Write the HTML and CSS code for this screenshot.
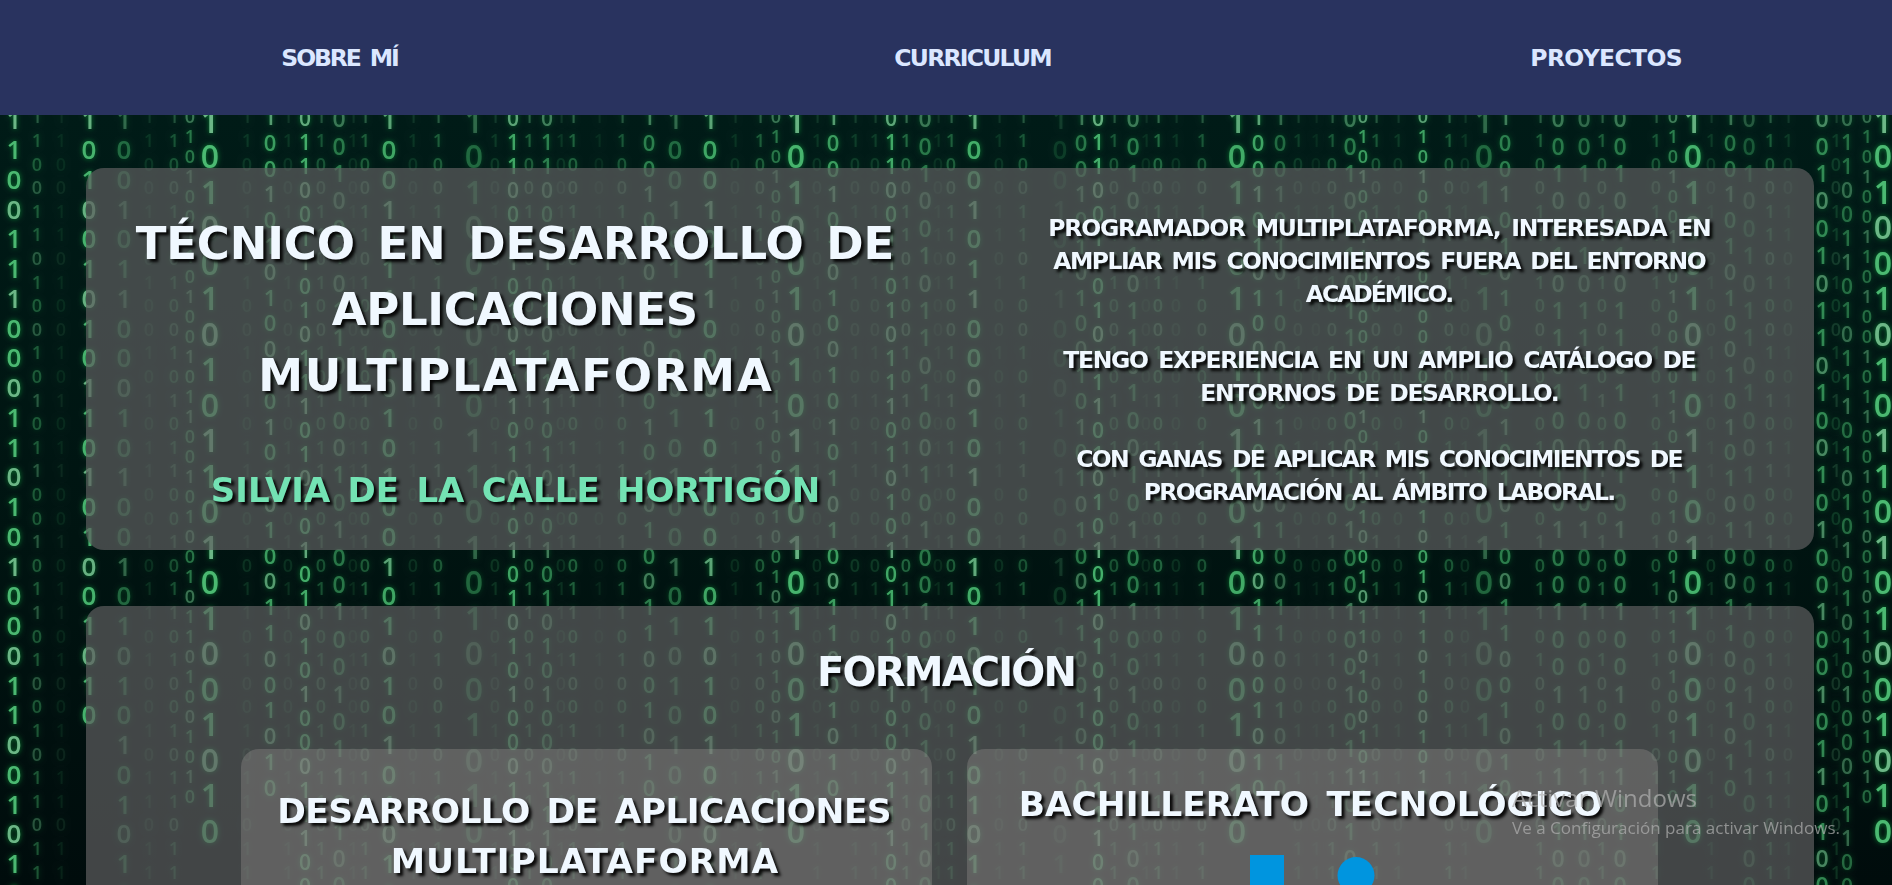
FILE: index.html
```html
<!DOCTYPE html>
<html lang="es">
<head>
<meta charset="utf-8">
<title>Portfolio</title>
<link rel="stylesheet" href="styles.css">
</head>
<body>
<canvas class="rain" id="rain" width="1892" height="885"></canvas>
<nav class="nav">
  <a class="nav-link"><span class="fit" data-width="116">SOBRE MÍ</span></a>
  <a class="nav-link"><span class="fit" data-width="156">CURRICULUM</span></a>
  <a class="nav-link"><span class="fit" data-width="150">PROYECTOS</span></a>
</nav>
<main class="main">
  <section class="card hero">
    <div class="intro">
      <h1 class="title">
        <span class="fit" data-width="754">TÉCNICO EN DESARROLLO DE</span>
        <span class="fit" data-width="362">APLICACIONES</span>
        <span class="fit" data-width="509">MULTIPLATAFORMA</span>
      </h1>
      <h2 class="name"><span class="fit" data-width="606">SILVIA DE LA CALLE HORTIGÓN</span></h2>
    </div>
    <div class="about">
      <p>
        <span class="fit" data-width="661">PROGRAMADOR MULTIPLATAFORMA, INTERESADA EN</span>
        <span class="fit" data-width="651">AMPLIAR MIS CONOCIMIENTOS FUERA DEL ENTORNO</span>
        <span class="fit" data-width="146">ACADÉMICO.</span>
      </p>
      <p>
        <span class="fit" data-width="631">TENGO EXPERIENCIA EN UN AMPLIO CATÁLOGO DE</span>
        <span class="fit" data-width="357">ENTORNOS DE DESARROLLO.</span>
      </p>
      <p>
        <span class="fit" data-width="605">CON GANAS DE APLICAR MIS CONOCIMIENTOS DE</span>
        <span class="fit" data-width="470">PROGRAMACIÓN AL ÁMBITO LABORAL.</span>
      </p>
    </div>
  </section>
  <section class="card training">
    <h2 class="section-title"><span class="fit" data-width="256">FORMACIÓN</span></h2>
    <div class="courses">
      <article class="course">
        <h3>
          <span class="fit" data-width="611">DESARROLLO DE APLICACIONES</span>
          <span class="fit" data-width="384">MULTIPLATAFORMA</span>
        </h3>
      </article>
      <article class="course course-second">
        <h3><span class="fit" data-width="580">BACHILLERATO TECNOLÓGICO</span></h3>
        <svg class="logo" width="126" height="60" viewBox="0 0 126 60">
          <rect x="0" y="0" width="34" height="60" fill="#0095df"/>
          <circle cx="106" cy="20.500" r="18.500" fill="#0095df"/>
        </svg>
      </article>
    </div>
  </section>
</main>
<aside class="watermark">
  <div class="watermark-title"><span class="fit" data-width="183">Activar Windows</span></div>
  <div class="watermark-text"><span class="fit" data-width="326">Ve a Configuración para activar Windows.</span></div>
</aside>
<script src="script.js"></script>
</body>
</html>
```
FILE: styles.css
```css
* { box-sizing: border-box; }
html, body { height: 100%; }
body {
  margin: 0;
  height: 885px;
  overflow: hidden;
  background: #001410;
  color: #f0f8ff;
  font-family: "DejaVu Sans", sans-serif;
  font-weight: 700;
}
.rain {
  position: fixed;
  inset: 0;
  z-index: -1;
  filter: blur(0.6px);
}
h1, h2, h3, p { margin: 0; font-weight: 700; }
.fit { display: inline-block; white-space: nowrap; }
.nav {
  height: 115px;
  padding-left: 24px;
  overflow: hidden;
  display: grid;
  grid-template-columns: repeat(3, 633px);
  justify-items: center;
  background: #29335f;
  color: #dbe7ff;
  font-size: 23.500px;
  line-height: 116px;
}
.main {
  height: 770px;
  padding: 53px 78px 0 86px;
  overflow: hidden;
  display: flex;
  flex-direction: column;
  gap: 56px;
}
.card {
  flex-shrink: 0;
  border-radius: 18px;
  background: rgba(94, 94, 96, 0.7);
  text-shadow: 3px 3px 3px rgba(0, 0, 0, 0.9);
}
.hero {
  height: 382px;
  padding-top: 43px;
  display: grid;
  grid-template-columns: 858px 1fr;
  text-align: center;
}
.title, .name, .about p, .course h3 {
  display: flex;
  flex-direction: column;
  align-items: center;
}
.title { font-size: 45px; line-height: 66px; }
.name {
  margin-top: 57px;
  padding-left: 1px;
  color: #73e2b3;
  font-size: 34px;
  line-height: 49px;
}
.about {
  display: flex;
  flex-direction: column;
  gap: 33px;
  padding: 1px 0 0 2px;
  font-size: 23.500px;
  line-height: 33px;
}
.training { height: 420px; padding-top: 36px; }
.section-title {
  padding-right: 6px;
  font-size: 40px;
  line-height: 60px;
  text-align: center;
}
.courses {
  margin: 47px 156px 0 155px;
  display: grid;
  grid-template-columns: 1fr 1fr;
  gap: 35px;
}
.course {
  height: 300px;
  padding-top: 37px;
  border-radius: 18px;
  background: rgba(165, 160, 160, 0.3);
}
.course h3 {
  padding-right: 4px;
  font-size: 34.500px;
  line-height: 50px;
}
.course-second { padding-top: 30px; }
.logo { display: block; margin: 26px 0 0 283px; }
.watermark {
  position: fixed;
  left: 1512px;
  top: 780px;
  color: rgba(175, 175, 175, 0.72);
  font-family: "Open Sans", sans-serif;
  font-weight: 400;
}
.watermark-title { font-size: 24px; line-height: 36px; }
.watermark-text { font-size: 17px; line-height: 24px; }
```
FILE: script.js
```js
// Spread each line's letters to its target width.
document.querySelectorAll('.fit').forEach(function (el) {
  var size = parseFloat(getComputedStyle(el).fontSize);
  var bold = getComputedStyle(el).fontWeight === '700';
  if (bold) el.style.wordSpacing = (size * 0.16) + 'px';
  var target = Number(el.dataset.width) + (bold ? size * 0.1 : 2);
  var spacing = (target - el.getBoundingClientRect().width) / (el.textContent.length - 1);
  el.style.letterSpacing = spacing + 'px';
  el.style.marginRight = (-spacing) + 'px';
});

// Binary rain: kind -> first centre, pitch, font size, repeating bits, last centre
var kinds = {
  A: [121, 35.5, 32, '101001010110101001010', 840],
  B: [120, 29.75, 26, '10010110001010010101010101', 900],
  L: [120, 29.75, 26, '11001110001101010001100101', 900],
  M: [120, 29.75, 26, '101001010110101001010', 720],
  C: [118, 24, 21, '01100110101110101010101010001110', 900],
  D: [119, 27.4, 23, '0010010110100101001001011010', 900],
  G: [117, 25.8, 22, '10010101001010101001', 790],
  E: [117, 23.6, 18, '11001101001010110010110100101101', 900],
  F: [117, 20, 18, '01010011010010110010100101101001', 800]
};
var columns = [
  [14,'L',.95],[37,'E',.35],[61,'E',.1],[89,'M',.9],[124,'B',.42],[149,'E',.14],[174,'E',.3],[190,'F',.5],
  [210,'A',.95],[247,'E',.15],[270,'G',.75],[288,'E',.14],[305,'C',.85],[321,'E',.3],[339,'D',.5],[353,'E',.12],
  [365,'E',.35],[389,'B',.8],[413,'E',.14],[438,'E',.35],[474,'A',.4],[495,'E',.16],[513,'C',.8],[529,'E',.35],
  [547,'C',.55],[561,'E',.14],[573,'E',.38],[599,'E',.1],[622,'E',.32],[649,'G',.55],[675,'B',.42],[710,'B',.8],
  [735,'E',.13],[760,'E',.35],[776,'F',.5],[796,'A',.9],[817,'E',.14],[833,'G',.75],[855,'E',.18],[875,'E',.18],
  [891,'C',.82],[906,'E',.42],[925,'D',.5],[938,'E',.12],[951,'E',.36],[974,'B',.85],[999,'E',.14],[1023,'E',.32],
  [1060,'B',.17],[1081,'G',.5],[1098,'C',.88],[1114,'E',.32],[1133,'D',.52],[1146,'E',.12],[1158,'E',.42],
  [1176,'E',.14],[1202,'E',.32],[1237,'A',.82],[1258,'G',.8],[1280,'G',.42],[1298,'E',.18],[1316,'E',.1],
  [1332,'E',.32],[1350,'D',.5],[1363,'F',.75],[1376,'E',.32],[1398,'E',.16],[1423,'F',.78],[1449,'E',.34],
  [1465,'E',.14],[1484,'A',.4],[1505,'G',.55],[1540,'E',.35],[1558,'D',.5],[1584,'D',.42],[1602,'E',.35],
  [1620,'D',.5],[1656,'E',.32],[1673,'F',.55],[1693,'A',.88],[1711,'E',.16],[1730,'G',.48],[1749,'D',.32],
  [1770,'E',.34],[1788,'E',.16],[1822,'D',.62],[1836,'E',.18],[1847,'C',.45],[1867,'F',.45],[1883,'A',.95]
];
var ctx = document.getElementById('rain').getContext('2d');
var bg = ctx.createLinearGradient(0, 115, 0, 885);
bg.addColorStop(0, '#001b17');
bg.addColorStop(0.55, '#001411');
bg.addColorStop(1, '#000c0c');
ctx.fillStyle = bg;
ctx.fillRect(0, 0, 1892, 885);
ctx.textAlign = 'center';
ctx.textBaseline = 'alphabetic';
columns.forEach(function (col) {
  var k = kinds[col[1]];
  ctx.globalAlpha = col[2];
  ctx.font = '600 ' + k[2] + 'px "Open Sans", sans-serif';
  ctx.shadowColor = '#0a8a35';
  ctx.shadowBlur = 5;
  for (var i = 0; k[0] + i * k[1] < k[4]; i++) {
    ctx.fillStyle = i % 3 ? '#4fbf76' : '#72bd8c';
    ctx.fillText(k[3][i % k[3].length], col[0], k[0] + i * k[1] + k[2] * 0.36);
  }
});
```
